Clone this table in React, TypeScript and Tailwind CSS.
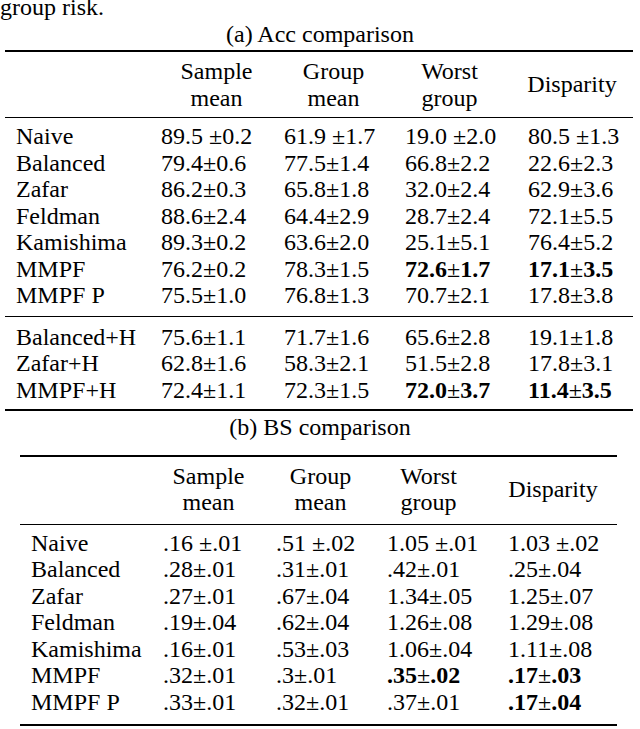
import React from "react";

type Cell = { v: string; b?: boolean };

const accRows1: [string, Cell[]][] = [
  ["Naive", [{ v: "89.5 ±0.2" }, { v: "61.9 ±1.7" }, { v: "19.0 ±2.0" }, { v: "80.5 ±1.3" }]],
  ["Balanced", [{ v: "79.4±0.6" }, { v: "77.5±1.4" }, { v: "66.8±2.2" }, { v: "22.6±2.3" }]],
  ["Zafar", [{ v: "86.2±0.3" }, { v: "65.8±1.8" }, { v: "32.0±2.4" }, { v: "62.9±3.6" }]],
  ["Feldman", [{ v: "88.6±2.4" }, { v: "64.4±2.9" }, { v: "28.7±2.4" }, { v: "72.1±5.5" }]],
  ["Kamishima", [{ v: "89.3±0.2" }, { v: "63.6±2.0" }, { v: "25.1±5.1" }, { v: "76.4±5.2" }]],
  ["MMPF", [{ v: "76.2±0.2" }, { v: "78.3±1.5" }, { v: "72.6±1.7", b: true }, { v: "17.1±3.5", b: true }]],
  ["MMPF P", [{ v: "75.5±1.0" }, { v: "76.8±1.3" }, { v: "70.7±2.1" }, { v: "17.8±3.8" }]],
];

const accRows2: [string, Cell[]][] = [
  ["Balanced+H", [{ v: "75.6±1.1" }, { v: "71.7±1.6" }, { v: "65.6±2.8" }, { v: "19.1±1.8" }]],
  ["Zafar+H", [{ v: "62.8±1.6" }, { v: "58.3±2.1" }, { v: "51.5±2.8" }, { v: "17.8±3.1" }]],
  ["MMPF+H", [{ v: "72.4±1.1" }, { v: "72.3±1.5" }, { v: "72.0±3.7", b: true }, { v: "11.4±3.5", b: true }]],
];

const bsRows: [string, Cell[]][] = [
  ["Naive", [{ v: ".16 ±.01" }, { v: ".51 ±.02" }, { v: "1.05 ±.01" }, { v: "1.03 ±.02" }]],
  ["Balanced", [{ v: ".28±.01" }, { v: ".31±.01" }, { v: ".42±.01" }, { v: ".25±.04" }]],
  ["Zafar", [{ v: ".27±.01" }, { v: ".67±.04" }, { v: "1.34±.05" }, { v: "1.25±.07" }]],
  ["Feldman", [{ v: ".19±.04" }, { v: ".62±.04" }, { v: "1.26±.08" }, { v: "1.29±.08" }]],
  ["Kamishima", [{ v: ".16±.01" }, { v: ".53±.03" }, { v: "1.06±.04" }, { v: "1.11±.08" }]],
  ["MMPF", [{ v: ".32±.01" }, { v: ".3±.01" }, { v: ".35±.02", b: true }, { v: ".17±.03", b: true }]],
  ["MMPF P", [{ v: ".33±.01" }, { v: ".32±.01" }, { v: ".37±.01" }, { v: ".17±.04", b: true }]],
];

function Value({ c }: { c: Cell }) {
  if (!c.b) return <span className="whitespace-pre">{c.v}</span>;
  const [a, b] = c.v.split("±");
  return (
    <span className="whitespace-pre">
      <span className="font-bold">{a}</span>±<span className="font-bold">{b}</span>
    </span>
  );
}

function Row({ label, cells, cols }: { label: string; cells: Cell[]; cols: string }) {
  return (
    <div className={`grid ${cols}`}>
      <div className="pl-[11px] whitespace-pre">{label}</div>
      {cells.map((c, i) => (
        <div key={i} className="pl-[11px]">
          <Value c={c} />
        </div>
      ))}
    </div>
  );
}

function Header({ cols, adj }: { cols: string; adj: string[] }) {
  return (
    <div className={`grid ${cols} items-center`}>
      <div />
      <div className={`text-center ${adj[0]}`}>
        Sample
        <br />
        mean
      </div>
      <div className={`text-center ${adj[1]}`}>
        Group
        <br />
        mean
      </div>
      <div className={`text-center ${adj[2]}`}>
        Worst
        <br />
        group
      </div>
      <div className={`text-center ${adj[3]}`}>Disparity</div>
    </div>
  );
}

export default function App() {
  const cols1 = "grid-cols-[145px_123px_121px_123px_116px]";
  const cols2 = "grid-cols-[132px_113px_111px_121px_120px]";
  return (
    <div className="w-[640px] h-[729px] overflow-hidden bg-white text-black font-['Liberation_Serif',serif] text-[24px] leading-[26.5px]">
      <div className="-mt-[6px]">group risk.</div>
      <div className="text-center">(a) Acc comparison</div>
      <div className="ml-[5px] w-[628px] mt-[3px]">
        <div className="border-t-2 border-black" />
        <div className="py-[6px]">
          <Header cols={cols1} adj={["pl-[10px]", "", "pr-[12px]", "pr-[6px]"]} />
        </div>
        <div className="border-t border-black" />
        <div className="py-[5px]">
          {accRows1.map(([l, c]) => (
            <Row key={l} label={l} cells={c} cols={cols1} />
          ))}
        </div>
        <div className="border-t border-black mt-[2px]" />
        <div className="pt-[7px] pb-[6px]">
          {accRows2.map(([l, c]) => (
            <Row key={l} label={l} cells={c} cols={cols1} />
          ))}
        </div>
        <div className="border-t-2 border-black" />
      </div>
      <div className="text-center mt-[3px]">(b) BS comparison</div>
      <div className="ml-[20px] w-[597px] mt-[14px]">
        <div className="border-t-2 border-black" />
        <div className="pt-[6px] pb-[8px]">
          <Header cols={cols2} adj={["", "", "pr-[16px]", "pr-[8px]"]} />
        </div>
        <div className="border-t border-black" />
        <div className="pt-[5px] pb-[9px]">
          {bsRows.map(([l, c]) => (
            <Row key={l} label={l} cells={c} cols={cols2} />
          ))}
        </div>
        <div className="border-t-2 border-black" />
      </div>
    </div>
  );
}
